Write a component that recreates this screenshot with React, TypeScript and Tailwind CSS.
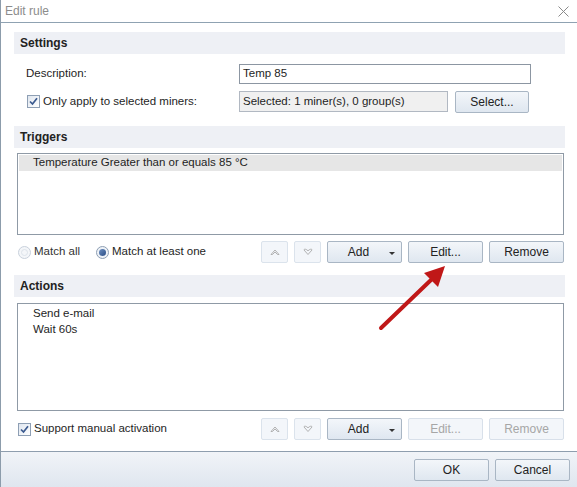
import React from "react";

const font = { fontFamily: '"Liberation Sans", Arial, sans-serif' };

function SectionHeader({ title }: { title: string }) {
  return (
    <div className="flex h-[22px] w-[551px] items-center bg-[#eef0f5] pl-[6px] text-[12px] font-bold text-[#222]">
      {title}
    </div>
  );
}

function Button({
  label,
  width = "w-[75px]",
  disabled,
  dropdown,
}: {
  label: string;
  width?: string;
  disabled?: boolean;
  dropdown?: boolean;
}) {
  return (
    <div
      className={
        "relative flex h-[22px] items-center justify-center rounded-[2px] border text-[12px] " +
        width +
        (disabled
          ? " border-[#d8e0ea] bg-[#f3f6fa] text-[#a6a6a6]"
          : " border-[#a9b6c4] bg-gradient-to-b from-[#f3f6fa] to-[#dfe7f0] text-[#222]")
      }
    >
      <span className={dropdown ? "-ml-[12px]" : ""}>{label}</span>
      {dropdown ? (
        <span className="absolute right-[6px] top-[10px] h-0 w-0 border-x-[3px] border-t-[3px] border-x-transparent border-t-[#333]" />
      ) : null}
    </div>
  );
}

function MoveButton({ dir }: { dir: "up" | "down" }) {
  return (
    <div className="flex h-[22px] w-[27px] items-center justify-center rounded-[2px] border border-[#dbe3ec] bg-[#f3f6fa]">
      <svg width="10" height="8" viewBox="0 0 10 8">
        {dir === "up" ? (
          <path d="M1 6.5 L5 2 L9 6.5 L7.5 6.5 L5 4 L2.5 6.5 Z" fill="none" stroke="#a9a9a9" strokeWidth="0.9" />
        ) : (
          <path d="M1 2 C1 0.8 3 0.8 5 2.8 C7 0.8 9 0.8 9 2 L5 6.5 Z" fill="none" stroke="#a9a9a9" strokeWidth="0.9" />
        )}
      </svg>
    </div>
  );
}

function Checkbox() {
  return (
    <div className="flex h-[13px] w-[13px] items-center justify-center border border-[#8e9fb4] bg-gradient-to-br from-[#dfe6ef] to-white">
      <svg width="9" height="9" viewBox="0 0 9 9">
        <path d="M1 4.5 L3.5 7 L8 1.2" fill="none" stroke="#3b5a8f" strokeWidth="1.7" />
      </svg>
    </div>
  );
}

function Radio({ checked }: { checked?: boolean }) {
  return (
    <div
      className={
        "flex h-[13px] w-[13px] items-center justify-center rounded-full border " +
        (checked ? "border-[#8e9fb4] bg-[#eef2f7]" : "border-[#c9d1dc] bg-[#f4f6f9]")
      }
    >
      {checked ? (
        <div className="h-[7px] w-[7px] rounded-full bg-gradient-to-br from-[#6d8fc0] to-[#2a4d86]" />
      ) : (
        <div className="h-[7px] w-[7px] rounded-full border border-[#dde3ea]" />
      )}
    </div>
  );
}

function ButtonRow({ editDisabled }: { editDisabled?: boolean }) {
  return (
    <div className="flex items-center gap-[6px]">
      <MoveButton dir="up" />
      <MoveButton dir="down" />
      <Button label="Add" dropdown />
      <Button label="Edit..." disabled={editDisabled} />
      <Button label="Remove" disabled={editDisabled} />
    </div>
  );
}

export default function App() {
  return (
    <div
      className="relative h-[487px] w-[577px] overflow-hidden border-l border-[#8c9cab] bg-white text-[11.5px] text-[#1e1e1e]"
      style={font}
    >
      {/* title bar */}
      <div className="flex h-[23px] items-center justify-between border-b border-[#8fa2b2] pl-[4px] pr-[8px]">
        <span className="text-[12px] text-[#8c8c8c]">Edit rule</span>
        <svg width="11" height="11" viewBox="0 0 11 11">
          <path d="M0.5 0.5 L10.5 10.5 M10.5 0.5 L0.5 10.5" stroke="#8a8a8a" strokeWidth="1" />
        </svg>
      </div>

      <div className="flex flex-col pl-[13px] pt-[9px]">
        <SectionHeader title="Settings" />
        <div className="mt-[10px] flex h-[20px] items-center pl-[12px]">
          <span className="w-[213px]">Description:</span>
          <div className="flex h-[20px] w-[292px] items-center border border-[#8c96a2] pl-[3px]">Temp 85</div>
        </div>
        <div className="mt-[6px] flex h-[23px] items-center pl-[13px]">
          <Checkbox />
          <span className="ml-[3px] w-[196px]">Only apply to selected miners:</span>
          <div className="flex h-[21px] w-[209px] items-center border border-[#b1b8c2] bg-[#f0f0f0] pl-[3px]">
            Selected: 1 miner(s), 0 group(s)
          </div>
          <div className="ml-[7px]">
            <Button label="Select..." width="w-[74px]" />
          </div>
        </div>

        <div className="mt-[13px]">
          <SectionHeader title="Triggers" />
        </div>
        <div className="ml-[3px] mt-[5px] h-[82px] w-[547px] border border-[#8f9aa6] p-[1px]">
          <div className="flex h-[16px] items-center bg-[#e6e6e6] pl-[14px]">Temperature Greater than or equals 85 °C</div>
        </div>
        <div className="mt-[6px] flex w-[550px] items-center justify-between pl-[4px]">
          <div className="flex items-center">
            <Radio />
            <span className="ml-[3px] text-[#333]">Match all</span>
            <span className="ml-[16px]">
              <Radio checked />
            </span>
            <span className="ml-[3px]">Match at least one</span>
          </div>
          <ButtonRow />
        </div>

        <div className="mt-[12px]">
          <SectionHeader title="Actions" />
        </div>
        <div className="ml-[3px] mt-[6px] h-[108px] w-[547px] border border-[#8f9aa6] px-[1px] pt-[2px]">
          <div className="flex h-[16px] items-center pl-[14px]">Send e-mail</div>
          <div className="flex h-[16px] items-center pl-[14px]">Wait 60s</div>
        </div>
        <div className="mt-[7px] flex w-[550px] items-center justify-between pl-[4px]">
          <div className="flex items-center">
            <Checkbox />
            <span className="ml-[3px]">Support manual activation</span>
          </div>
          <ButtonRow editDisabled />
        </div>
      </div>

      {/* footer */}
      <div className="absolute bottom-0 left-0 right-0 flex h-[36px] items-center justify-end gap-[6px] border-t border-[#8e9eae] bg-gradient-to-b from-[#f1f4f8] to-[#dfe6ef] pr-[7px]">
        <Button label="OK" />
        <Button label="Cancel" />
      </div>

      {/* annotation arrow */}
      <svg className="pointer-events-none absolute left-0 top-0" width="577" height="487">
        <line x1="380" y1="328" x2="431" y2="279" stroke="#c01818" strokeWidth="4" strokeLinecap="round" />
        <path d="M444 266 L437 287 L423 273 Z" fill="#c01818" />
      </svg>
    </div>
  );
}
